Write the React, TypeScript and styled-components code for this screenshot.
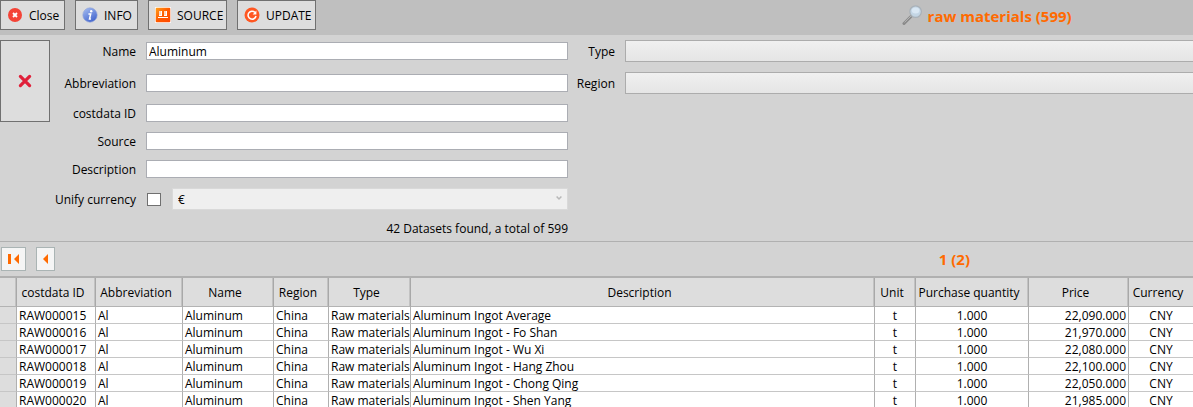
import React, { useId } from "react";
import styled, { createGlobalStyle } from "styled-components";

const Global = createGlobalStyle`
  * { box-sizing: border-box; }
  html, body { margin: 0; background: #d3d3d3; overflow: hidden; }
  body, button, input, select {
    font-family: "Segoe UI", "Open Sans", "Noto Sans", sans-serif;
    font-size: 12px;
    line-height: 16px;
    color: #000;
  }
`;

const Toolbar = styled.header`
  display: flex;
  align-items: flex-start;
  height: 35px;
  background: #bfbfbf;
`;

const ToolGroup = styled.div`
  display: flex;
  flex: 1;
  gap: 10px;
`;

const ToolButton = styled.button<{ $w: number }>`
  display: flex;
  align-items: center;
  gap: 6px;
  width: ${(p) => p.$w}px;
  height: 30px;
  padding: 0 6px;
  border: 1px solid #707070;
  background: #dddddd;
  white-space: nowrap;
  > svg { flex: none; }
  > span { padding-top: 2px; }
`;

const Heading = styled.h1<{ $share: string }>`
  display: flex;
  flex: 0 0 ${(p) => p.$share};
  align-items: center;
  justify-content: center;
  gap: 4px;
  margin: 0;
  height: 32px;
  font-size: 15px;
  line-height: 20px;
  font-weight: 700;
  color: #ff6a00;
  white-space: nowrap;
`;

const Filters = styled.form`
  display: grid;
  grid-template-columns: 50px 76px minmax(0, 422fr) 37px minmax(0, 568fr);
  grid-template-rows: 22px 22px 18px 18px 18px 22px 18px;
  gap: 10px;
  align-items: center;
  padding: 5px 0 3px;
  border-bottom: 1px solid #b0b0b0;
`;

const ClearButton = styled.button`
  grid-row: 1 / 4;
  grid-column: 1;
  align-self: stretch;
  display: flex;
  align-items: center;
  justify-content: center;
  padding: 0;
  border: 1px solid #707070;
  background: #dddddd;
`;

const Label = styled.label<{ $col: number; $row: number }>`
  grid-column: ${(p) => p.$col};
  grid-row: ${(p) => p.$row};
  justify-self: end;
  padding-top: 2px;
  white-space: nowrap;
`;

const TextBox = styled.input<{ $row: number }>`
  grid-column: 3;
  grid-row: ${(p) => p.$row};
  width: 100%;
  height: 18px;
  padding: 0 2px;
  border: 1px solid #abadb3;
  border-radius: 0;
  background: #fff;
  outline: 0;
`;

const Combo = styled.select<{ $row: number }>`
  grid-column: 5;
  grid-row: ${(p) => p.$row};
  appearance: none;
  width: 100%;
  height: 22px;
  border: solid #acacac;
  border-width: 1px 0 1px 1px;
  border-radius: 0;
  background: linear-gradient(#f0f0f0, #e5e5e5);
`;

const CurrencyRow = styled.div`
  grid-column: 3;
  grid-row: 6;
  display: flex;
  align-items: center;
  gap: 11px;
  padding-left: 1px;
`;

const Check = styled.input`
  appearance: none;
  flex: none;
  width: 14px;
  height: 13px;
  margin: 0;
  border: 1px solid #707070;
  background: #fff;
`;

const CurrencyBox = styled.div`
  display: grid;
  flex: 1;
  align-items: center;
  > * { grid-area: 1 / 1; }
  > svg { justify-self: end; margin: 0 6px 2px 0; }
`;

const CurrencySelect = styled.select`
  appearance: none;
  width: 100%;
  height: 22px;
  padding: 2px 5px 0;
  border: 1px solid #d9d9d9;
  border-radius: 0;
  background: #efefef;
  &:disabled { color: #000; opacity: 1; }
`;

const Summary = styled.output`
  grid-column: 3;
  grid-row: 7;
  text-align: right;
  white-space: nowrap;
`;

const Pager = styled.nav`
  display: flex;
  align-items: center;
  height: 34px;
`;

const PageButton = styled.button<{ $w: number }>`
  display: flex;
  align-items: center;
  justify-content: center;
  width: ${(p) => p.$w}px;
  height: 24px;
  padding: 0;
  border: 1px solid #aab4b4;
  background: #f5f5f5;
`;

const PageButtons = styled(ToolGroup)`
  padding-left: 1px;
`;

const Grid = styled.table`
  width: 100%;
  table-layout: fixed;
  border-collapse: separate;
  border-spacing: 0;
  border-top: 2px solid #b0b0b0;
  white-space: nowrap;
`;

const HeadCell = styled.th<{ $w?: number }>`
  width: ${(p) => (p.$w ? `${p.$w}px` : "auto")};
  height: 29px;
  padding: 2px 6px 0 0;
  border-right: 1px solid #a8a8a8;
  border-bottom: 1px solid #b3b3b3;
  background: #dddddd;
  box-shadow: inset -1px 0 #c2c2c2;
  font-weight: 400;
  text-align: center;
  &:last-child { border-right: 0; box-shadow: none; }
`;

const Cell = styled.td<{ $align?: string; $head?: boolean }>`
  height: 17px;
  padding: 2px 2px 0;
  border-right: 1px solid #b0b0b0;
  border-bottom: 1px solid #c6c6c6;
  background: ${(p) => (p.$head ? "#dddddd" : "#fff")};
  line-height: 14px;
  text-align: ${(p) => p.$align || "left"};
  &:last-child { border-right: 0; }
`;

const CloseIcon = () => (
  <svg width="16" height="16" viewBox="0 0 16 16">
    <circle cx="8" cy="8" r="7" fill="#f44336" />
    <path d="M6 6l4 4M10 6l-4 4" stroke="#fff" strokeWidth="1.8" />
  </svg>
);

const InfoIcon = () => (
  <svg width="16" height="16" viewBox="0 0 16 16">
    <defs>
      <linearGradient id="info" x1="0" y1="0" x2="0.6" y2="1">
        <stop offset="0" stopColor="#a9c0f2" />
        <stop offset="1" stopColor="#4668cf" />
      </linearGradient>
    </defs>
    <circle cx="8" cy="8" r="7.2" fill="url(#info)" stroke="#8ea3d8" strokeWidth=".6" />
    <circle cx="9.2" cy="4.2" r="1.2" fill="#fff" />
    <path d="M6.4 6.9h2.3L7.5 12h1.4" fill="none" stroke="#fff" strokeWidth="1.5" />
  </svg>
);

const SourceIcon = () => (
  <svg width="16" height="16" viewBox="0 0 16 16">
    <defs>
      <linearGradient id="src" x1="0" y1="0" x2="1" y2="1">
        <stop offset="0" stopColor="#ffa01c" />
        <stop offset=".5" stopColor="#ff5a00" />
        <stop offset="1" stopColor="#ff4800" />
      </linearGradient>
    </defs>
    <rect width="16" height="16" rx="1" fill="#fff" />
    <rect x=".7" y=".7" width="14.6" height="14.6" rx="1" fill="url(#src)" />
    <path d="M4 4h3v5H4zM9 4h3v5H9zM3 10h10v1H3z" fill="#fff" />
    <path d="M5 4v4M10 4v4" stroke="#ff9a55" strokeWidth=".8" />
  </svg>
);

const UpdateIcon = () => (
  <svg width="16" height="16" viewBox="0 0 16 16">
    <circle cx="8" cy="8" r="7.5" fill="#ff5722" />
    <path d="M11 5.4A4 4 0 1 0 12 9" fill="none" stroke="#fff" strokeWidth="1.5" />
    <path d="M12.4 3.6v4H8.6z" fill="#fff" />
  </svg>
);

const LensIcon = () => (
  <svg width="22" height="22" viewBox="0 0 22 22">
    <path d="M2 18.5l7-7" stroke="#8a8a8a" strokeWidth="3" strokeLinecap="round" />
    <path d="M2.5 17.4l6.5-6.4" stroke="#b4b4b4" strokeWidth="1" />
    <circle cx="13.6" cy="6.6" r="5.8" fill="#c3d5e4" stroke="#a9b1b8" strokeWidth="1.2" />
    <ellipse cx="13.6" cy="5.6" rx="3.8" ry="3" fill="#d9e7f3" />
  </svg>
);

const CrossIcon = () => (
  <svg width="14" height="14" viewBox="0 0 14 14">
    <path d="M2.4 2.4l9.2 9.2M11.6 2.4l-9.2 9.2" stroke="#e0203a" strokeWidth="3.2" strokeLinecap="round" />
  </svg>
);

const FirstIcon = () => (
  <svg width="12" height="12" viewBox="0 0 12 12">
    <path d="M0 1h3v10H0zM11 1v10L6 6z" fill="#ff6a00" />
  </svg>
);

const PrevIcon = () => (
  <svg width="6" height="12" viewBox="0 0 6 12">
    <path d="M5 1v10L0 6z" fill="#ff6a00" />
  </svg>
);

const Chevron = () => (
  <svg width="6" height="6" viewBox="0 0 6 6">
    <path d="M.6 1.4L3 4l2.4-2.6" fill="none" stroke="#b8b8b8" strokeWidth="1.5" />
  </svg>
);

const tools = [
  { label: "Close", icon: <CloseIcon />, w: 65 },
  { label: "INFO", icon: <InfoIcon />, w: 63 },
  { label: "SOURCE", icon: <SourceIcon />, w: 79 },
  { label: "UPDATE", icon: <UpdateIcon />, w: 79 },
];

const textFilters = [
  { label: "Name", value: "Aluminum" },
  { label: "Abbreviation", value: "" },
  { label: "costdata ID", value: "" },
  { label: "Source", value: "" },
  { label: "Description", value: "" },
];

const columns: { title: string; w?: number; align?: string }[] = [
  { title: "costdata ID", w: 79 },
  { title: "Abbreviation", w: 87 },
  { title: "Name", w: 91 },
  { title: "Region", w: 55 },
  { title: "Type", w: 82 },
  { title: "Description" },
  { title: "Unit", w: 41, align: "center" },
  { title: "Purchase quantity", w: 113, align: "center" },
  { title: "Price", w: 100, align: "right" },
  { title: "Currency", w: 64, align: "center" },
];

const materials = [
  ["RAW000015", "Aluminum Ingot Average", "22,090.000"],
  ["RAW000016", "Aluminum Ingot - Fo Shan", "21,970.000"],
  ["RAW000017", "Aluminum Ingot - Wu Xi", "22,080.000"],
  ["RAW000018", "Aluminum Ingot - Hang Zhou", "22,100.000"],
  ["RAW000019", "Aluminum Ingot - Chong Qing", "22,050.000"],
  ["RAW000020", "Aluminum Ingot - Shen Yang", "21,985.000"],
].map(([id, text, price]) => [
  id, "Al", "Aluminum", "China", "Raw materials", text, "t", "1.000", price, "CNY",
]);

export default function App() {
  const id = useId();
  return (
    <>
      <Global />
      <Toolbar>
        <ToolGroup>
          {tools.map((t) => (
            <ToolButton key={t.label} type="button" $w={t.w}>
              {t.icon}
              <span>{t.label}</span>
            </ToolButton>
          ))}
        </ToolGroup>
        <Heading $share="34.6%">
          <LensIcon />
          raw materials (599)
        </Heading>
      </Toolbar>
      <Filters>
        <ClearButton type="reset" aria-label="Clear filters">
          <CrossIcon />
        </ClearButton>
        {textFilters.map((f, i) => (
          <React.Fragment key={f.label}>
            <Label $col={2} $row={i + 1} htmlFor={`${id}-${i}`}>{f.label}</Label>
            <TextBox $row={i + 1} id={`${id}-${i}`} type="text" defaultValue={f.value} />
          </React.Fragment>
        ))}
        <Label $col={2} $row={6} htmlFor={`${id}-unify`}>Unify currency</Label>
        <CurrencyRow>
          <Check id={`${id}-unify`} type="checkbox" />
          <CurrencyBox>
            <CurrencySelect disabled aria-label="Currency">
              <option>€</option>
            </CurrencySelect>
            <Chevron />
          </CurrencyBox>
        </CurrencyRow>
        <Summary>42 Datasets found, a total of 599</Summary>
        {["Type", "Region"].map((name, i) => (
          <React.Fragment key={name}>
            <Label $col={4} $row={i + 1} htmlFor={`${id}-${name}`}>{name}</Label>
            <Combo $row={i + 1} id={`${id}-${name}`} />
          </React.Fragment>
        ))}
      </Filters>
      <Pager aria-label="Pages">
        <PageButtons>
          <PageButton type="button" aria-label="First page" $w={25}><FirstIcon /></PageButton>
          <PageButton type="button" aria-label="Previous page" $w={19}><PrevIcon /></PageButton>
        </PageButtons>
        <Heading as="div" $share="40%">1 (2)</Heading>
      </Pager>
      <Grid>
        <thead>
          <tr>
            <HeadCell as="td" $w={17} />
            {columns.map((c) => (
              <HeadCell key={c.title} scope="col" $w={c.w}>{c.title}</HeadCell>
            ))}
          </tr>
        </thead>
        <tbody>
          {materials.map((row) => (
            <tr key={row[0]}>
              <Cell $head />
              {row.map((value, i) => (
                <Cell key={columns[i].title} $align={columns[i].align}>{value}</Cell>
              ))}
            </tr>
          ))}
        </tbody>
      </Grid>
    </>
  );
}
